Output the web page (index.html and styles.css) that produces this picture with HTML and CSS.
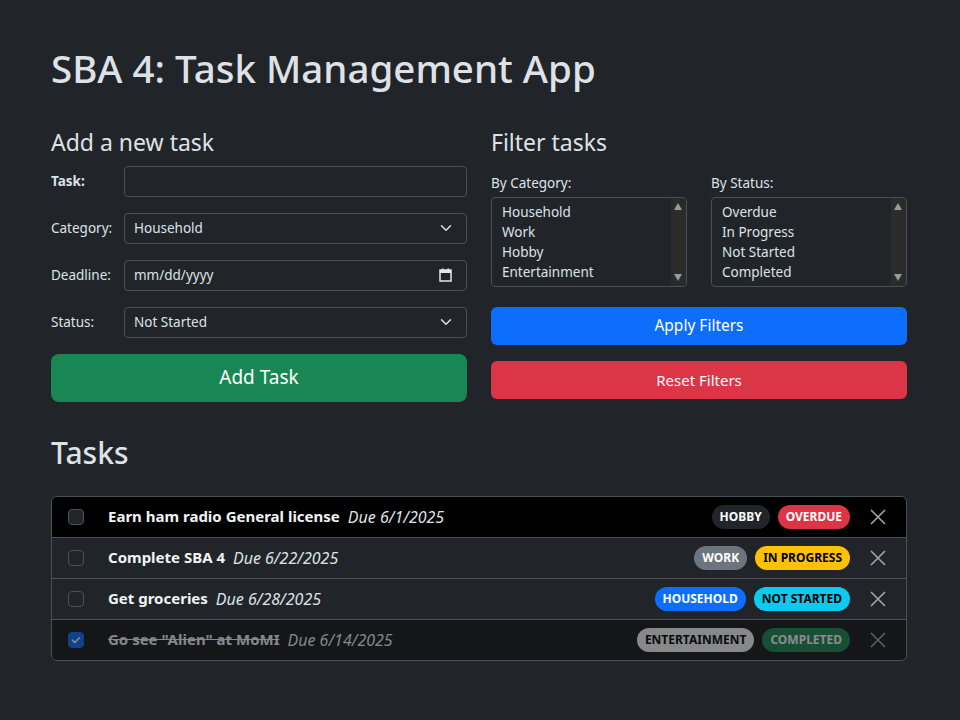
FILE: index.html
```html
<!DOCTYPE html>
<html lang="en">
<head>
<meta charset="utf-8">
<title>SBA 4: Task Management App</title>
<link rel="stylesheet" href="styles.css">
</head>
<body>
<main class="container">
  <h1 class="title">SBA 4: Task Management App</h1>
  <div class="columns">
    <section class="col">
      <h3 class="subhead">Add a new task</h3>
      <div class="form-row">
        <label class="form-label bold">Task:</label>
        <div class="control"></div>
      </div>
      <div class="form-row">
        <label class="form-label">Category:</label>
        <div class="control select">
          <span>Household</span>
          <svg class="chev" width="12" height="12" viewBox="0 0 16 16"><path d="M2 5l6 6 6-6" fill="none" stroke="#dee2e6" stroke-width="2" stroke-linecap="round" stroke-linejoin="round"/></svg>
        </div>
      </div>
      <div class="form-row">
        <label class="form-label">Deadline:</label>
        <div class="control select">
          <span>mm/dd/yyyy</span>
          <svg class="cal" width="13" height="14" viewBox="0 0 13 14"><rect x="1" y="2" width="11" height="11" fill="none" stroke="#e6e6e6" stroke-width="1.5"/><rect x="1" y="2" width="11" height="3" fill="#e6e6e6"/><rect x="3" y="0.5" width="1.5" height="2.5" fill="#e6e6e6"/><rect x="8.5" y="0.5" width="1.5" height="2.5" fill="#e6e6e6"/></svg>
        </div>
      </div>
      <div class="form-row">
        <label class="form-label">Status:</label>
        <div class="control select">
          <span>Not Started</span>
          <svg class="chev" width="12" height="12" viewBox="0 0 16 16"><path d="M2 5l6 6 6-6" fill="none" stroke="#dee2e6" stroke-width="2" stroke-linecap="round" stroke-linejoin="round"/></svg>
        </div>
      </div>
      <button class="btn btn-lg btn-success">Add Task</button>
    </section>
    <section class="col">
      <h3 class="subhead">Filter tasks</h3>
      <div class="filters">
        <div class="filter">
          <label class="filter-label">By Category:</label>
          <div class="listbox">
            <ul class="options">
              <li>Household</li>
              <li>Work</li>
              <li>Hobby</li>
              <li>Entertainment</li>
            </ul>
            <div class="scrollbar">
              <span class="arrow up"></span>
              <span class="arrow down"></span>
            </div>
          </div>
        </div>
        <div class="filter">
          <label class="filter-label">By Status:</label>
          <div class="listbox">
            <ul class="options">
              <li>Overdue</li>
              <li>In Progress</li>
              <li>Not Started</li>
              <li>Completed</li>
            </ul>
            <div class="scrollbar">
              <span class="arrow up"></span>
              <span class="arrow down"></span>
            </div>
          </div>
        </div>
      </div>
      <button class="btn btn-primary">Apply Filters</button>
      <button class="btn btn-danger btn-reset">Reset Filters</button>
    </section>
  </div>

  <h2 class="tasks-head">Tasks</h2>
  <ul class="list-group">
    <li class="task task-active">
      <span class="check"></span>
      <span class="task-name">Earn ham radio General license</span>
      <span class="task-due">Due 6/1/2025</span>
      <span class="badges">
        <span class="badge bg-dark">HOBBY</span>
        <span class="badge bg-danger">OVERDUE</span>
      </span>
      <svg class="close" width="16" height="16" viewBox="0 0 16 16"><path d="M1 1l14 14M15 1L1 15" stroke="#a3a5a7" stroke-width="1.6"/></svg>
    </li>
    <li class="task">
      <span class="check"></span>
      <span class="task-name">Complete SBA 4</span>
      <span class="task-due">Due 6/22/2025</span>
      <span class="badges">
        <span class="badge bg-secondary">WORK</span>
        <span class="badge bg-warning">IN PROGRESS</span>
      </span>
      <svg class="close" width="16" height="16" viewBox="0 0 16 16"><path d="M1 1l14 14M15 1L1 15" stroke="#a3a5a7" stroke-width="1.6"/></svg>
    </li>
    <li class="task">
      <span class="check"></span>
      <span class="task-name">Get groceries</span>
      <span class="task-due">Due 6/28/2025</span>
      <span class="badges">
        <span class="badge bg-primary">HOUSEHOLD</span>
        <span class="badge bg-info">NOT STARTED</span>
      </span>
      <svg class="close" width="16" height="16" viewBox="0 0 16 16"><path d="M1 1l14 14M15 1L1 15" stroke="#a3a5a7" stroke-width="1.6"/></svg>
    </li>
    <li class="task task-done">
      <span class="check checked"><svg width="10" height="10" viewBox="0 0 10 10"><path d="M1.5 5.2l2.3 2.3 4.7-4.7" fill="none" stroke="#fff" stroke-width="1.6" stroke-linecap="round" stroke-linejoin="round"/></svg></span>
      <span class="task-name">Go see "Alien" at MoMI</span>
      <span class="task-due">Due 6/14/2025</span>
      <span class="badges">
        <span class="badge bg-light">ENTERTAINMENT</span>
        <span class="badge bg-success">COMPLETED</span>
      </span>
      <svg class="close" width="16" height="16" viewBox="0 0 16 16"><path d="M1 1l14 14M15 1L1 15" stroke="#a3a5a7" stroke-width="1.6"/></svg>
    </li>
  </ul>
</main>
</body>
</html>
```
FILE: styles.css
```css
* { box-sizing: border-box; }

body {
  margin: 0;
  background: #212529;
  color: #dee2e6;
  font-family: "Noto Sans", "Open Sans", sans-serif;
  font-size: 16px;
  line-height: 1.5;
}

.container {
  width: 907px;
  padding: 45px 0 0 51px;
}

.title {
  margin: 0 0 37px;
  font-size: 38.5px;
  line-height: 47px;
  font-weight: 500;
}

.columns {
  display: grid;
  grid-template-columns: 1fr 1fr;
  column-gap: 24px;
}

.col {
  display: flex;
  flex-direction: column;
}

.subhead {
  margin: 0 0 9px;
  font-size: 23px;
  font-weight: 400;
  line-height: 1.2;
}

.form-row {
  display: flex;
  align-items: center;
  margin-bottom: 16px;
}

.form-label {
  width: 73px;
  flex: none;
  font-size: 13.5px;
}

.bold { font-weight: 700; }

.control {
  flex: 1;
  height: 31px;
  border: 1px solid #495057;
  border-radius: 4px;
  background: #212529;
  font-size: 13.5px;
  padding: 0 14px 0 9px;
}

.select {
  display: flex;
  align-items: center;
  justify-content: space-between;
}

.btn {
  display: block;
  width: 100%;
  border: 1px solid transparent;
  border-radius: 6px;
  color: #fff;
  font-family: inherit;
  font-size: 15.5px;
  line-height: 1.5;
  padding: 6px 12px;
  cursor: pointer;
}

.btn-lg {
  font-size: 19px;
  padding: 8px 16px;
  height: 48px;
  border-radius: 8px;
}

.btn-success { background: #198754; }
.btn-primary { background: #0d6efd; margin-top: 20px; height: 38px; }
.btn-danger { background: #dc3545; }
.btn-reset { margin-top: 16px; height: 38px; font-size: 15px; }

.filters {
  display: grid;
  grid-template-columns: 1fr 1fr;
  column-gap: 24px;
  margin-top: 7px;
}

.filter-label {
  display: block;
  font-size: 13.5px;
  margin-bottom: 4px;
}

.listbox {
  display: flex;
  height: 90px;
  border: 1px solid #495057;
  border-radius: 4px;
  overflow: hidden;
}

.options {
  flex: 1;
  list-style: none;
  margin: 0;
  padding: 4px 10px;
  font-size: 13.5px;
  line-height: 20px;
}

.scrollbar {
  width: 15px;
  background: #2c2b2b;
  position: relative;
}

.arrow {
  position: absolute;
  left: 3px;
  width: 0;
  height: 0;
  border-left: 4.5px solid transparent;
  border-right: 4.5px solid transparent;
}

.arrow.up { top: 5px; border-bottom: 7px solid #9a9a9a; }
.arrow.down { bottom: 5px; border-top: 7px solid #9a9a9a; }

.tasks-head {
  margin: 33px 0 25px;
  font-size: 30px;
  font-weight: 500;
  line-height: 1.2;
}

.list-group {
  list-style: none;
  margin: 0;
  padding: 0;
  border: 1px solid #495057;
  border-radius: 6px;
  overflow: hidden;
}

.task {
  display: flex;
  align-items: center;
  height: 41px;
  padding: 0 20px 0 16px;
  border-top: 1px solid #495057;
  background: #212529;
}

.task:first-child { border-top: 0; height: 40px; }

.task-active { background: #000; }
.task-done { background: #141618; }

.check {
  width: 16px;
  height: 16px;
  flex: none;
  border: 1px solid #495057;
  border-radius: 4px;
  background: #212529;
  margin-right: 24px;
  display: flex;
  align-items: center;
  justify-content: center;
}

.check.checked {
  background: #0d6efd;
  border-color: #0d6efd;
}

.task-name {
  font-weight: 700;
  font-size: 15px;
  color: #f1f3f5;
}

.task-due {
  font-style: italic;
  font-size: 16px;
  margin-left: 8px;
  color: #dee2e6;
}

.badges {
  margin-left: auto;
  display: flex;
  gap: 8px;
}

.badge {
  display: inline-block;
  font-size: 12px;
  font-weight: 700;
  line-height: 1;
  padding: 6px 8px;
  border-radius: 12px;
  color: #fff;
}

.bg-dark { background: #212529; }
.bg-danger { background: #dc3545; }
.bg-secondary { background: #6c757d; }
.bg-warning { background: #ffc107; color: #000; }
.bg-primary { background: #0d6efd; }
.bg-info { background: #0dcaf0; color: #000; }
.bg-light { background: #f8f9fa; color: #000; }
.bg-success { background: #198754; }

.close {
  margin-left: 20px;
  flex: none;
}

.task-done .check,
.task-done .badges,
.task-done .close { opacity: 0.5; }

.task-done .task-name {
  text-decoration: line-through;
  color: #85888b;
}

.task-done .task-due { color: #85888b; }
```
